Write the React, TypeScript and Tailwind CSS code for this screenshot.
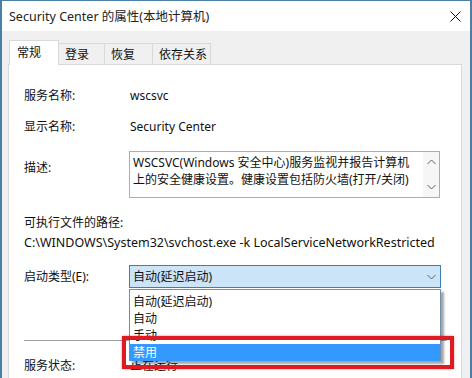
import React from "react";

const TABS = [
  { label: "常规", w: "w-[50px]", active: true },
  { label: "登录", w: "w-[46px]", active: false },
  { label: "恢复", w: "w-[48px]", active: false },
  { label: "依存关系", w: "w-[58px]", active: false },
];

const OPTIONS = ["自动(延迟启动)", "自动", "手动", "禁用"];

function Chevron({ up = false }: { up?: boolean }) {
  return (
    <svg width="9" height="6" viewBox="0 0 9 6" className="block">
      <path
        d={up ? "M0.5 5 L4.5 1 L8.5 5" : "M0.5 1 L4.5 5 L8.5 1"}
        fill="none"
        stroke="#606060"
        strokeWidth="1"
      />
    </svg>
  );
}

export default function App() {
  return (
    <div className="relative w-[472px] h-[378px] overflow-hidden bg-[#f0f0f0] border-l-2 border-r-2 border-t border-[#4a7fa6] text-[12px] leading-[17px] text-[#111] whitespace-nowrap font-['Noto_Sans','Noto_Sans_CJK_SC',sans-serif]">
      {/* title bar */}
      <div className="h-[30px] bg-white flex items-center justify-between pl-[7px] pr-[9px]">
        <span className="text-[12.5px] text-[#222]">Security Center 的属性(本地计算机)</span>
        <svg width="11" height="11" viewBox="0 0 11 11">
          <path d="M0.5 0.5 L10.5 10.5 M10.5 0.5 L0.5 10.5" stroke="#111" strokeWidth="1" />
        </svg>
      </div>

      {/* tabs */}
      <div className="flex items-end h-[33px] pl-[7px]">
        {TABS.map((t) =>
          t.active ? (
            <div
              key={t.label}
              className={`${t.w} h-[25px] -mb-px z-10 bg-white border border-b-0 border-[#d9d9d9] pl-[7px] pt-[3px]`}
            >
              {t.label}
            </div>
          ) : (
            <div
              key={t.label}
              className={`${t.w} h-[21px] border border-l-0 border-b-0 border-[#d9d9d9] pl-[6px] pt-[2px]`}
            >
              {t.label}
            </div>
          )
        )}
      </div>

      {/* panel */}
      <div className="ml-[6px] w-[454px] h-[330px] bg-white border border-[#d9d9d9] pl-[15px] pt-[22px]">
        <div className="flex h-[17px]">
          <span className="w-[106px]">服务名称:</span>
          <span>wscsvc</span>
        </div>
        <div className="flex h-[17px] mt-[14px]">
          <span className="w-[106px]">显示名称:</span>
          <span>Security Center</span>
        </div>
        <div className="flex mt-[16px]">
          <span className="w-[105px] mt-[8px]">描述:</span>
          <div className="w-[311px] h-[47px] border border-[#adadad] flex">
            <div className="flex-1 pl-[3px] pt-[2px] leading-[17px]">
              WSCSVC(Windows 安全中心)服务监视并报告计算机
              <br />
              上的安全健康设置。健康设置包括防火墙(打开/关闭)
            </div>
            <div className="w-[16px] bg-[#f6f6f6] flex flex-col items-center justify-between py-[7px]">
              <Chevron up />
              <Chevron />
            </div>
          </div>
        </div>
        <div className="mt-[16px] h-[17px]">可执行文件的路径:</div>
        <div className="mt-[3px] h-[17px] text-[12.5px]">
          C:\WINDOWS\System32\svchost.exe -k LocalServiceNetworkRestricted
        </div>
        <div className="flex items-center mt-[14px]">
          <span className="w-[105px]">启动类型(E):</span>
          <div className="w-[312px] h-[23px] bg-[#cce4f7] border border-[#3c7fb1] flex items-center justify-between pl-[3px] pr-[4px]">
            <span>自动(延迟启动)</span>
            <Chevron />
          </div>
        </div>
        <div className="mt-[52px] mr-[14px] h-px bg-[#a0a0a0]" />
        <div className="flex mt-[16px]">
          <span className="w-[106px]">服务状态:</span>
          <span>正在运行</span>
        </div>
      </div>

      {/* open dropdown list */}
      <div className="absolute left-[127px] top-[288px] w-[312px] h-[72px] bg-white border border-[#6f8fab] pt-[3px] shadow-[3px_3px_2px_rgba(0,0,0,0.35)]">
        {OPTIONS.map((o, i) => (
          <div
            key={o}
            className={`h-[17px] pl-[3px] ${i === 3 ? "bg-[#3399ff] text-white" : ""}`}
          >
            {o}
          </div>
        ))}
      </div>

      {/* red annotation box */}
      <div className="absolute left-[120px] top-[335px] w-[332px] h-[33px] border-[4px] border-[#de1a22] shadow-[0_0_2px_rgba(160,0,0,0.5)]" />
    </div>
  );
}
